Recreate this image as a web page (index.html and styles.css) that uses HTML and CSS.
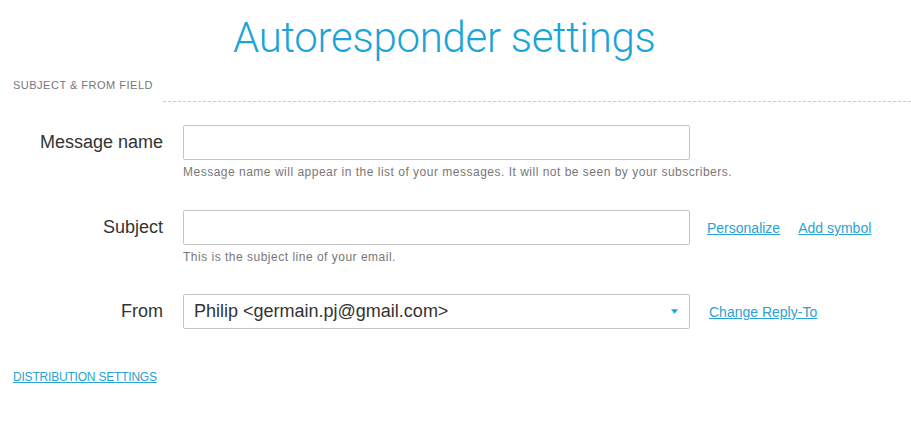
FILE: index.html
```html
<!DOCTYPE html>
<html lang="en">
<head>
  <meta charset="UTF-8" />
  <title>Autoresponder settings</title>
  <link rel="stylesheet" href="styles.css">
</head>
<body>
  <div class="page">
    <h1 class="page-title">Autoresponder settings</h1>

    <div class="section-head">SUBJECT &amp; FROM FIELD</div>
    <div class="section-rule"></div>

    <form class="settings-form">
      <div class="form-row">
        <label class="row-label" for="msg-name">Message name</label>
        <div class="row-field">
          <input type="text" id="msg-name" class="text-input">
          <div class="hint">Message name will appear in the list of your messages. It will not be seen by your subscribers.</div>
        </div>
      </div>

      <div class="form-row">
        <label class="row-label" for="subject">Subject</label>
        <div class="row-field">
          <input type="text" id="subject" class="text-input">
          <div class="hint">This is the subject line of your email.</div>
        </div>
        <div class="row-links">
          <a href="#">Personalize</a>
          <a href="#">Add symbol</a>
        </div>
      </div>

      <div class="form-row from-row">
        <label class="row-label">From</label>
        <div class="row-field">
          <div class="select-box">
            <span>Philip &lt;germain.pj@gmail.com&gt;</span>
            <svg class="caret" viewBox="0 0 8 5"><path d="M0 0h8L4 5z"/></svg>
          </div>
        </div>
        <div class="row-links reply">
          <a href="#">Change Reply-To</a>
        </div>
      </div>
    </form>

    <a class="section-link" href="#">DISTRIBUTION SETTINGS</a>
  </div>
</body>
</html>
```

FILE: styles.css
```css
html, body {
  margin: 0;
  background: #fff;
  font-family: 'Liberation Sans', Arial, sans-serif;
  color: #333;
}

.page {
  padding: 0 0 0 13px;
}

.page-title {
  margin: 0;
  padding: 13px 0 0 220px;
  font-family: 'Roboto', 'Liberation Sans', sans-serif;
  font-weight: 300;
  font-size: 42px;
  line-height: 50px;
  color: #1ba4d8;
  letter-spacing: -0.3px;
}

.section-head {
  margin-top: 16px;
  font-size: 11px;
  color: #777;
  letter-spacing: 0.5px;
}

.section-rule {
  margin: 10px 0 0 150px;
  border-top: 1px dashed #ccc;
}

.settings-form {
  display: flex;
  flex-direction: column;
  gap: 30px;
  margin-top: 23px;
}

.form-row {
  display: flex;
  align-items: flex-start;
}

.from-row {
  margin-top: -1px;
}

.row-label {
  width: 150px;
  text-align: right;
  font-size: 18px;
  line-height: 35px;
  color: #333;
}

.row-field {
  width: 507px;
  margin-left: 20px;
}

.text-input,
.select-box {
  display: block;
  box-sizing: border-box;
  width: 507px;
  height: 35px;
  margin: 0;
  border: 1px solid #c4c4c4;
  border-radius: 2px;
  background: #fff;
}

.hint {
  margin-top: 4px;
  font-size: 12px;
  line-height: 16px;
  color: #777;
  letter-spacing: 0.5px;
  white-space: nowrap;
}

.select-box {
  display: flex;
  align-items: center;
  justify-content: space-between;
  padding: 0 10px;
  font-size: 18px;
  color: #333;
}

.caret {
  width: 7px;
  height: 5px;
  fill: #1ba4d8;
  margin-right: 1px;
}

.row-links {
  display: flex;
  gap: 18px;
  margin-left: 17px;
  line-height: 36px;
}

.row-links.reply {
  margin-left: 19px;
}

.row-links a,
.section-link {
  font-size: 14px;
  color: #2aa2d2;
  text-decoration: underline;
}

.section-link {
  display: inline-block;
  margin-top: 40px;
  font-size: 12px;
  letter-spacing: -0.2px;
}
```
